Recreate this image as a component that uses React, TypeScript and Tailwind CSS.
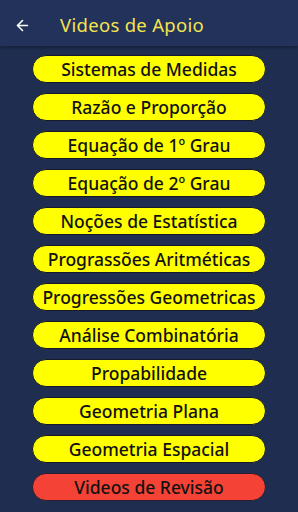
import { ArrowLeft } from 'lucide-react';

const topics = [
  'Sistemas de Medidas',
  'Razão e Proporção',
  'Equação de 1º Grau',
  'Equação de 2º Grau',
  'Noções de Estatística',
  'Prograssões Aritméticas',
  'Progressões Geometricas',
  'Análise Combinatória',
  'Propabilidade',
  'Geometria Plana',
  'Geometria Espacial',
];

export default function App() {
  return (
    <div className="w-[298px] h-[512px] overflow-hidden bg-[#1f2d50] font-['Noto_Sans',sans-serif]">
      <header className="h-[46px] pt-[4px] bg-[#22325a] flex items-center shadow-[0_2px_3px_rgba(0,0,0,0.25)]">
        <ArrowLeft className="ml-[14px] w-[17px] h-[17px] text-white" strokeWidth={2.25} />
        <h1 className="ml-[29px] text-[18.5px] tracking-[0.3px] text-[#f5e34f]">Videos de Apoio</h1>
      </header>
      <div className="flex flex-col items-center gap-[10px] pt-[9px]">
        {topics.map((t) => (
          <button
            key={t}
            className="w-[234px] h-[28px] pt-[2px] rounded-full bg-[#ffff00] border border-[#141a2a] text-[17.5px] font-medium text-[#111] leading-none flex items-center justify-center"
          >
            {t}
          </button>
        ))}
        <button className="w-[234px] h-[28px] pt-[2px] rounded-full bg-[#f44336] border border-[#2a1f30] text-[17.5px] font-medium text-[#111] leading-none flex items-center justify-center">
          Videos de Revisão
        </button>
      </div>
    </div>
  );
}
